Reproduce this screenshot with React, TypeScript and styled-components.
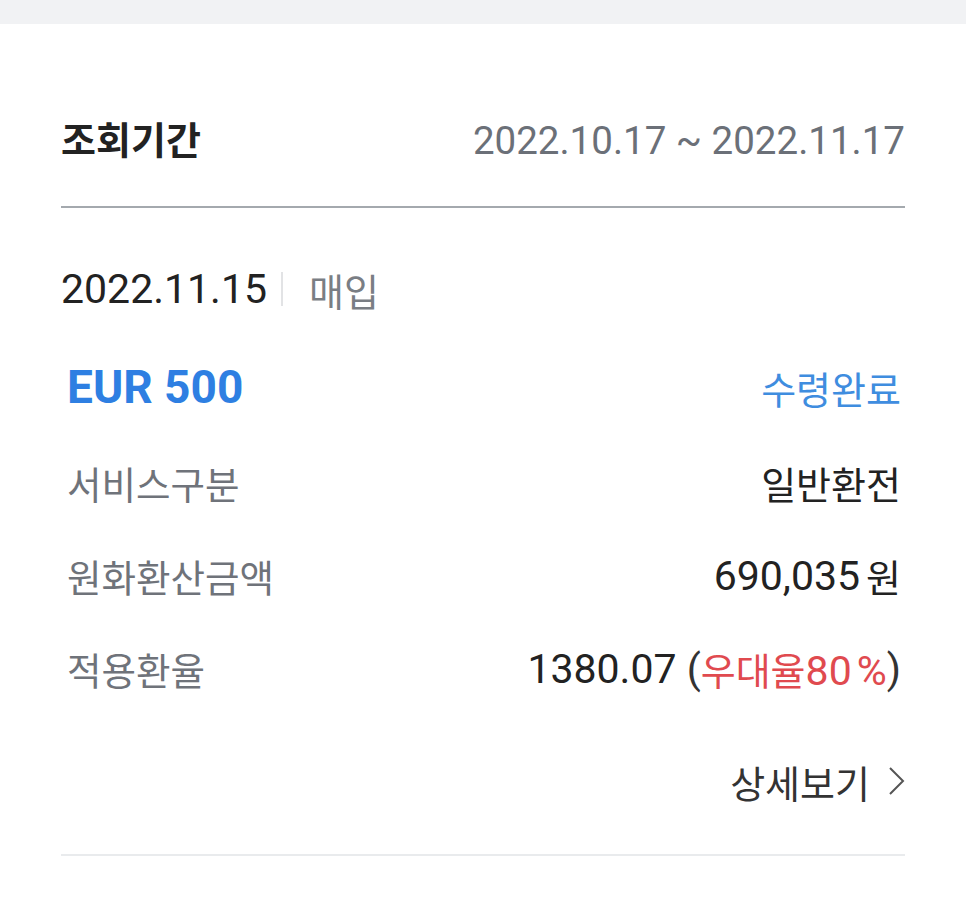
import React from "react";
import styled, { createGlobalStyle } from "styled-components";

const Global = createGlobalStyle`
  html, body { margin: 0; padding: 0; background: #ffffff; }
  body { font-family: Roboto, "Noto Sans CJK KR", "Noto Sans", sans-serif; }
`;

const TopBand = styled.div`
  height: 24px;
  background: #f1f2f4;
`;

const Content = styled.div`
  padding: 0 61px;
`;

const Header = styled.div`
  display: flex;
  justify-content: space-between;
  align-items: center;
  padding: 92px 0 40px;
  line-height: 50px;
  border-bottom: 2px solid #a4a9ae;
`;

const HeaderTitle = styled.div`
  font-size: 38px;
  font-weight: 700;
  color: #222;
`;

const Range = styled.div`
  font-size: 38.5px;
  color: #6b7078;
`;

const Row = styled.div<{ $h: number; $mt?: number; $end?: boolean }>`
  display: flex;
  justify-content: ${(p) => (p.$end ? "flex-end" : "space-between")};
  align-items: center;
  height: ${(p) => p.$h}px;
  margin-top: ${(p) => p.$mt ?? 0}px;
`;

const DateLine = styled.div`
  display: flex;
  align-items: center;
`;

const DateText = styled.span`
  font-size: 41px;
  color: #222;
`;

const Sep = styled.span`
  width: 2px;
  height: 34px;
  background: #e2e3e5;
  margin: 0 26px 0 14px;
`;

const Kind = styled.span`
  font-size: 38px;
  color: #7a7e84;
`;

const Amount = styled.div`
  font-size: 46px;
  font-weight: 700;
  color: #2e7fe2;
  padding-left: 6px;
`;

const Status = styled.div`
  font-size: 38px;
  color: #3f8ddf;
  padding-right: 4px;
`;

const Label = styled.div`
  font-size: 37.5px;
  color: #6f737a;
  padding-left: 6px;
`;

const Value = styled.div`
  font-size: 41px;
  color: #222;
  padding-right: 4px;
  display: flex;
  align-items: center;
`;

const KorValue = styled.div`
  font-size: 38px;
  color: #222;
  padding-right: 4px;
`;

const Won = styled.span`
  font-size: 38px;
  margin-left: 6px;
`;

const Red = styled.span`
  color: #e04a4f;
`;

const RedKor = styled.span`
  font-size: 38px;
`;

const Pct = styled.span`
  margin-left: 5px;
`;

const Paren = styled.span`
  color: #333;
`;

const Detail = styled.div`
  display: flex;
  align-items: center;
  font-size: 38px;
  color: #333;
  gap: 18px;
`;

const BottomLine = styled.div`
  margin-top: 48px;
  border-top: 2px solid #e9ebed;
`;

export default function App() {
  return (
    <>
      <Global />
      <TopBand />
      <Content>
        <Header>
          <HeaderTitle>조회기간</HeaderTitle>
          <Range>2022.10.17 ~ 2022.11.17</Range>
        </Header>
        <Row $h={50} $mt={56}>
          <DateLine>
            <DateText>2022.11.15</DateText>
            <Sep />
            <Kind>매입</Kind>
          </DateLine>
        </Row>
        <Row $h={50} $mt={48}>
          <Amount>EUR 500</Amount>
          <Status>수령완료</Status>
        </Row>
        <Row $h={93} $mt={24}>
          <Label>서비스구분</Label>
          <KorValue>일반환전</KorValue>
        </Row>
        <Row $h={93}>
          <Label>원화환산금액</Label>
          <Value>
            690,035<Won>원</Won>
          </Value>
        </Row>
        <Row $h={93}>
          <Label>적용환율</Label>
          <Value>
            1380.07&nbsp;<Paren>(</Paren>
            <Red>
              <RedKor>우대율</RedKor>80<Pct>%</Pct>
            </Red>
            <Paren>)</Paren>
          </Value>
        </Row>
        <Row $h={50} $mt={41} $end>
          <Detail>
            상세보기
            <svg width="17" height="30" viewBox="0 0 17 30">
              <polyline points="2,2 15,15 2,28" fill="none" stroke="#555" strokeWidth="2" />
            </svg>
          </Detail>
        </Row>
        <BottomLine />
      </Content>
    </>
  );
}
